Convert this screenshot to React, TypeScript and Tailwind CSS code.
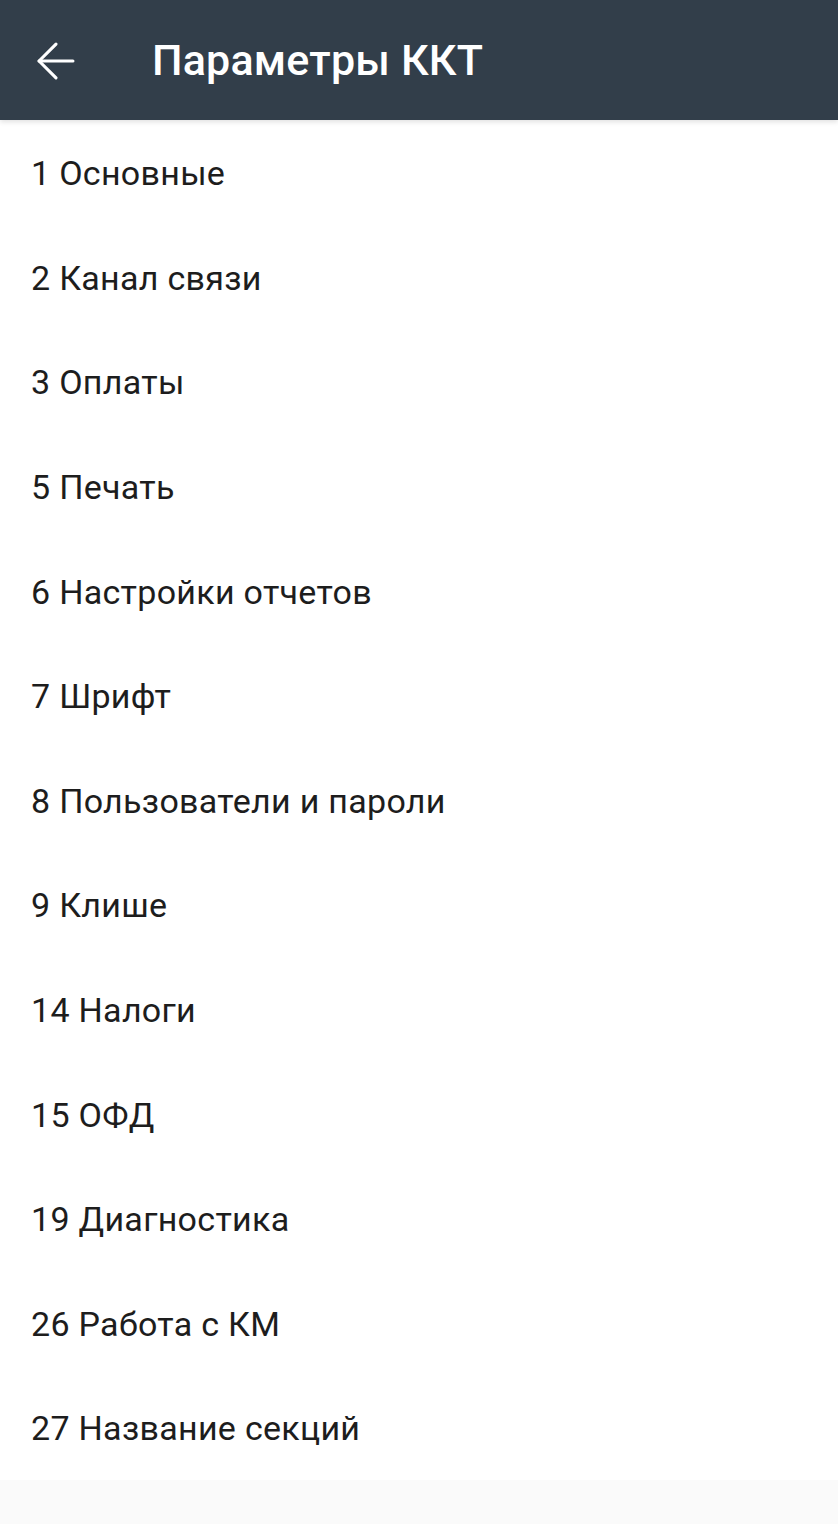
import { ArrowLeft } from "lucide-react";

const items = [
  "1 Основные",
  "2 Канал связи",
  "3 Оплаты",
  "5 Печать",
  "6 Настройки отчетов",
  "7 Шрифт",
  "8 Пользователи и пароли",
  "9 Клише",
  "14 Налоги",
  "15 ОФД",
  "19 Диагностика",
  "26 Работа с КМ",
  "27 Название секций",
];

const App = () => {
  return (
    <div className="min-h-[1524px] bg-[#fafafa] font-['Roboto',sans-serif]">
      <header className="relative z-10 flex h-[120px] items-center bg-[#323e4a] shadow-[0_2px_5px_rgba(0,0,0,0.12)]">
        <button className="flex w-[112px] items-center justify-center pt-[2px] text-white" aria-label="Back">
          <ArrowLeft className="h-[58px] w-[58px]" strokeWidth={1.3} />
        </button>
        <h1 className="ml-[40px] text-[43px] font-medium leading-none tracking-[0.2px] text-white">
          Параметры ККТ
        </h1>
      </header>

      <ul className="bg-white">
        {items.map((item) => (
          <li
            key={item}
            className="flex h-[104.6px] items-center pl-[31px] pt-[3px] text-[34px] tracking-[0.3px] text-[#1d1d1d]"
          >
            {item}
          </li>
        ))}
      </ul>
    </div>
  );
};

export default App;
